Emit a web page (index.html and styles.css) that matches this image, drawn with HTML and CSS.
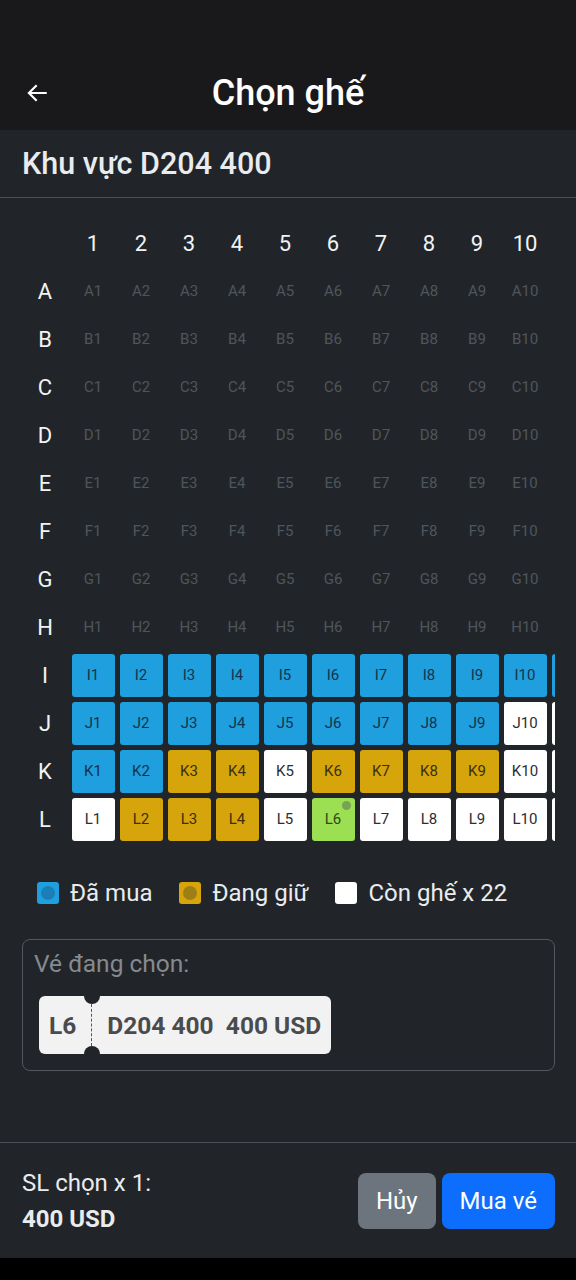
FILE: index.html
```html
<!DOCTYPE html>
<html lang="vi">
<head>
<meta charset="utf-8">
<title>Chọn ghế</title>
<link rel="stylesheet" href="styles.css">
</head>
<body>
<div class="app">
  <header class="topbar">
    <button class="back" aria-label="Quay lại">
      <svg width="26" height="26" viewBox="0 0 24 24" fill="none" stroke="#ffffff" stroke-width="2" stroke-linecap="square"><path d="M20 12H5M11 5.5L4.5 12l6.5 6.5"/></svg>
    </button>
    <h1 class="title">Chọn ghế</h1>
    <span></span>
  </header>

  <div class="zone">Khu vực D204 400</div>

  <div class="map">
    <div class="row head"><span class="lbl"></span><span class="cell num">1</span><span class="cell num">2</span><span class="cell num">3</span><span class="cell num">4</span><span class="cell num">5</span><span class="cell num">6</span><span class="cell num">7</span><span class="cell num">8</span><span class="cell num">9</span><span class="cell num">10</span></div>
    <div class="row"><span class="lbl">A</span><span class="cell"><span class="seat empty">A1</span></span><span class="cell"><span class="seat empty">A2</span></span><span class="cell"><span class="seat empty">A3</span></span><span class="cell"><span class="seat empty">A4</span></span><span class="cell"><span class="seat empty">A5</span></span><span class="cell"><span class="seat empty">A6</span></span><span class="cell"><span class="seat empty">A7</span></span><span class="cell"><span class="seat empty">A8</span></span><span class="cell"><span class="seat empty">A9</span></span><span class="cell"><span class="seat empty">A10</span></span></div>
    <div class="row"><span class="lbl">B</span><span class="cell"><span class="seat empty">B1</span></span><span class="cell"><span class="seat empty">B2</span></span><span class="cell"><span class="seat empty">B3</span></span><span class="cell"><span class="seat empty">B4</span></span><span class="cell"><span class="seat empty">B5</span></span><span class="cell"><span class="seat empty">B6</span></span><span class="cell"><span class="seat empty">B7</span></span><span class="cell"><span class="seat empty">B8</span></span><span class="cell"><span class="seat empty">B9</span></span><span class="cell"><span class="seat empty">B10</span></span></div>
    <div class="row"><span class="lbl">C</span><span class="cell"><span class="seat empty">C1</span></span><span class="cell"><span class="seat empty">C2</span></span><span class="cell"><span class="seat empty">C3</span></span><span class="cell"><span class="seat empty">C4</span></span><span class="cell"><span class="seat empty">C5</span></span><span class="cell"><span class="seat empty">C6</span></span><span class="cell"><span class="seat empty">C7</span></span><span class="cell"><span class="seat empty">C8</span></span><span class="cell"><span class="seat empty">C9</span></span><span class="cell"><span class="seat empty">C10</span></span></div>
    <div class="row"><span class="lbl">D</span><span class="cell"><span class="seat empty">D1</span></span><span class="cell"><span class="seat empty">D2</span></span><span class="cell"><span class="seat empty">D3</span></span><span class="cell"><span class="seat empty">D4</span></span><span class="cell"><span class="seat empty">D5</span></span><span class="cell"><span class="seat empty">D6</span></span><span class="cell"><span class="seat empty">D7</span></span><span class="cell"><span class="seat empty">D8</span></span><span class="cell"><span class="seat empty">D9</span></span><span class="cell"><span class="seat empty">D10</span></span></div>
    <div class="row"><span class="lbl">E</span><span class="cell"><span class="seat empty">E1</span></span><span class="cell"><span class="seat empty">E2</span></span><span class="cell"><span class="seat empty">E3</span></span><span class="cell"><span class="seat empty">E4</span></span><span class="cell"><span class="seat empty">E5</span></span><span class="cell"><span class="seat empty">E6</span></span><span class="cell"><span class="seat empty">E7</span></span><span class="cell"><span class="seat empty">E8</span></span><span class="cell"><span class="seat empty">E9</span></span><span class="cell"><span class="seat empty">E10</span></span></div>
    <div class="row"><span class="lbl">F</span><span class="cell"><span class="seat empty">F1</span></span><span class="cell"><span class="seat empty">F2</span></span><span class="cell"><span class="seat empty">F3</span></span><span class="cell"><span class="seat empty">F4</span></span><span class="cell"><span class="seat empty">F5</span></span><span class="cell"><span class="seat empty">F6</span></span><span class="cell"><span class="seat empty">F7</span></span><span class="cell"><span class="seat empty">F8</span></span><span class="cell"><span class="seat empty">F9</span></span><span class="cell"><span class="seat empty">F10</span></span></div>
    <div class="row"><span class="lbl">G</span><span class="cell"><span class="seat empty">G1</span></span><span class="cell"><span class="seat empty">G2</span></span><span class="cell"><span class="seat empty">G3</span></span><span class="cell"><span class="seat empty">G4</span></span><span class="cell"><span class="seat empty">G5</span></span><span class="cell"><span class="seat empty">G6</span></span><span class="cell"><span class="seat empty">G7</span></span><span class="cell"><span class="seat empty">G8</span></span><span class="cell"><span class="seat empty">G9</span></span><span class="cell"><span class="seat empty">G10</span></span></div>
    <div class="row"><span class="lbl">H</span><span class="cell"><span class="seat empty">H1</span></span><span class="cell"><span class="seat empty">H2</span></span><span class="cell"><span class="seat empty">H3</span></span><span class="cell"><span class="seat empty">H4</span></span><span class="cell"><span class="seat empty">H5</span></span><span class="cell"><span class="seat empty">H6</span></span><span class="cell"><span class="seat empty">H7</span></span><span class="cell"><span class="seat empty">H8</span></span><span class="cell"><span class="seat empty">H9</span></span><span class="cell"><span class="seat empty">H10</span></span></div>
    <div class="row"><span class="lbl">I</span><span class="cell"><span class="seat sold">I1</span></span><span class="cell"><span class="seat sold">I2</span></span><span class="cell"><span class="seat sold">I3</span></span><span class="cell"><span class="seat sold">I4</span></span><span class="cell"><span class="seat sold">I5</span></span><span class="cell"><span class="seat sold">I6</span></span><span class="cell"><span class="seat sold">I7</span></span><span class="cell"><span class="seat sold">I8</span></span><span class="cell"><span class="seat sold">I9</span></span><span class="cell"><span class="seat sold">I10</span></span><span class="cell"><span class="seat sold" aria-label="I11"></span></span></div>
    <div class="row"><span class="lbl">J</span><span class="cell"><span class="seat sold">J1</span></span><span class="cell"><span class="seat sold">J2</span></span><span class="cell"><span class="seat sold">J3</span></span><span class="cell"><span class="seat sold">J4</span></span><span class="cell"><span class="seat sold">J5</span></span><span class="cell"><span class="seat sold">J6</span></span><span class="cell"><span class="seat sold">J7</span></span><span class="cell"><span class="seat sold">J8</span></span><span class="cell"><span class="seat sold">J9</span></span><span class="cell"><span class="seat free">J10</span></span><span class="cell"><span class="seat free" aria-label="J11"></span></span></div>
    <div class="row"><span class="lbl">K</span><span class="cell"><span class="seat sold">K1</span></span><span class="cell"><span class="seat sold">K2</span></span><span class="cell"><span class="seat held">K3</span></span><span class="cell"><span class="seat held">K4</span></span><span class="cell"><span class="seat free">K5</span></span><span class="cell"><span class="seat held">K6</span></span><span class="cell"><span class="seat held">K7</span></span><span class="cell"><span class="seat held">K8</span></span><span class="cell"><span class="seat held">K9</span></span><span class="cell"><span class="seat free">K10</span></span><span class="cell"><span class="seat free" aria-label="K11"></span></span></div>
    <div class="row"><span class="lbl">L</span><span class="cell"><span class="seat free">L1</span></span><span class="cell"><span class="seat held">L2</span></span><span class="cell"><span class="seat held">L3</span></span><span class="cell"><span class="seat held">L4</span></span><span class="cell"><span class="seat free">L5</span></span><span class="cell"><span class="seat picked">L6<i class="dot"></i></span></span><span class="cell"><span class="seat free">L7</span></span><span class="cell"><span class="seat free">L8</span></span><span class="cell"><span class="seat free">L9</span></span><span class="cell"><span class="seat free">L10</span></span><span class="cell"><span class="seat free" aria-label="L11"></span></span></div>
  </div>

  <div class="legend">
    <span class="key"><i class="sw sw-sold"></i>Đã mua</span>
    <span class="key"><i class="sw sw-held"></i>Đang giữ</span>
    <span class="key"><i class="sw sw-free"></i>Còn ghế x 22</span>
  </div>

  <section class="chosen">
    <div class="chosen-title">Vé đang chọn:</div>
    <div class="ticket">
      <span class="t-seat">L6</span>
      <span class="t-info">D204 400&nbsp; 400 USD</span>
    </div>
  </section>

  <div class="spacer"></div>

  <footer class="bottom">
    <div class="sum">
      <div class="sum-count">SL chọn x 1:</div>
      <div class="sum-price">400 USD</div>
    </div>
    <div class="actions">
      <button class="btn btn-cancel">Hủy</button>
      <button class="btn btn-buy">Mua vé</button>
    </div>
  </footer>
  <div class="navbar"></div>
</div>
</body>
</html>
```

FILE: styles.css
```css
* { box-sizing: border-box; }
html, body { margin: 0; padding: 0; }
body {
  background: #212529;
  font-family: Roboto, "Noto Sans", "Liberation Sans", sans-serif;
  color: #e9ecef;
}
.app {
  width: 576px;
  height: 1280px;
  display: flex;
  flex-direction: column;
  background: #212529;
}
.topbar {
  height: 130px;
  flex: none;
  background: #19191c;
  display: grid;
  grid-template-columns: 1fr auto 1fr;
  align-items: center;
  padding: 58px 0 0;
  align-content: start;
}
.topbar > * { height: 70px; display: flex; align-items: center; }
.back {
  background: none;
  border: 0;
  padding: 0 0 0 24px;
  margin: 0;
  cursor: pointer;
  justify-self: start;
}
.title {
  margin: 0;
  font-size: 36px;
  font-weight: 500;
  color: #ffffff;
}
.zone {
  flex: none;
  height: 68px;
  padding: 0 22px;
  display: flex;
  align-items: center;
  font-size: 30.5px;
  font-weight: 500;
  color: #e9ecef;
  border-bottom: 1px solid #4b5057;
}
.map {
  flex: none;
  margin: 0 21px;
  padding-top: 21px;
  overflow: hidden;
}
.row {
  display: flex;
  height: 48px;
  align-items: center;
  width: max-content;
}
.lbl {
  width: 48px;
  flex: none;
  text-align: center;
  font-size: 22px;
  color: #f1f3f5;
}
.cell {
  width: 48px;
  flex: none;
  display: flex;
  justify-content: center;
  align-items: center;
}
.num { font-size: 22px; color: #f1f3f5; }
.seat {
  position: relative;
  width: 43px;
  height: 43px;
  border-radius: 3px;
  display: flex;
  align-items: center;
  justify-content: center;
  font-size: 15px;
  color: #1d2a35;
}
.seat.empty { color: #50555c; font-size: 15px; }
.seat.sold { background: #1f9fdd; color: #17324a; }
.seat.held { background: #d5a50b; color: #3a2f10; }
.seat.free { background: #ffffff; color: #2a2e33; }
.seat.picked { background: #9ddf52; color: #2e4a16; }
.dot {
  position: absolute;
  top: 3px;
  right: 4px;
  width: 9px;
  height: 9px;
  border-radius: 50%;
  background: #77a354;
}
.legend {
  flex: none;
  display: flex;
  align-items: center;
  margin-top: 38px;
  padding-left: 37px;
  height: 24px;
  gap: 27px;
  font-size: 24px;
  color: #e9ecef;
}
.key { display: flex; align-items: center; gap: 11px; }
.sw {
  width: 22px;
  height: 22px;
  border-radius: 3px;
  display: flex;
  align-items: center;
  justify-content: center;
}
.sw::after {
  content: "";
  width: 14px;
  height: 14px;
  border-radius: 50%;
}
.sw-sold { background: #1f9fdd; }
.sw-sold::after { background: #1b7fb7; }
.sw-held { background: #d5a50b; }
.sw-held::after { background: #9e7f15; }
.sw-free { background: #ffffff; }
.chosen {
  flex: none;
  margin: 34px 21px 0 22px;
  height: 132px;
  border: 1px solid #53585e;
  border-radius: 8px;
  padding: 10px 11px 0 16px;
}
.chosen-title {
  font-size: 24.5px;
  line-height: 28px;
  color: #868a8f;
  margin-left: -5px;
}
.ticket {
  position: relative;
  margin-top: 18px;
  display: inline-flex;
  align-items: center;
  height: 58px;
  background: #f2f2f3;
  border-radius: 6px;
  font-size: 24.5px;
  font-weight: 700;
  color: #4a4b4d;
}
.ticket::before, .ticket::after {
  content: "";
  position: absolute;
  left: 45px;
  width: 16px;
  height: 16px;
  border-radius: 50%;
  background: #212529;
}
.ticket::before { top: -8px; }
.ticket::after { bottom: -8px; }
.t-seat {
  padding: 0 15px 0 10px;
  height: 42px;
  display: flex;
  align-items: center;
  border-right: 1px dashed #555;
}
.t-info { padding: 0 10px 0 15px; }
.spacer { flex: 1; }
.bottom {
  flex: none;
  height: 116px;
  border-top: 1px solid #4b5057;
  display: flex;
  align-items: center;
  justify-content: space-between;
  padding: 0 21px 0 22px;
}
.sum { font-size: 24px; line-height: 36px; color: #e9ecef; }
.sum-price { font-weight: 700; }
.actions { display: flex; gap: 6px; }
.btn {
  height: 56px;
  border: 0;
  border-radius: 8px;
  padding: 0 18px;
  font-family: inherit;
  font-size: 24px;
  color: #ffffff;
  cursor: pointer;
}
.btn-cancel { background: #6c757d; }
.btn-buy { background: #0d6efd; }
.navbar { flex: none; height: 22px; background: #000000; }
```
